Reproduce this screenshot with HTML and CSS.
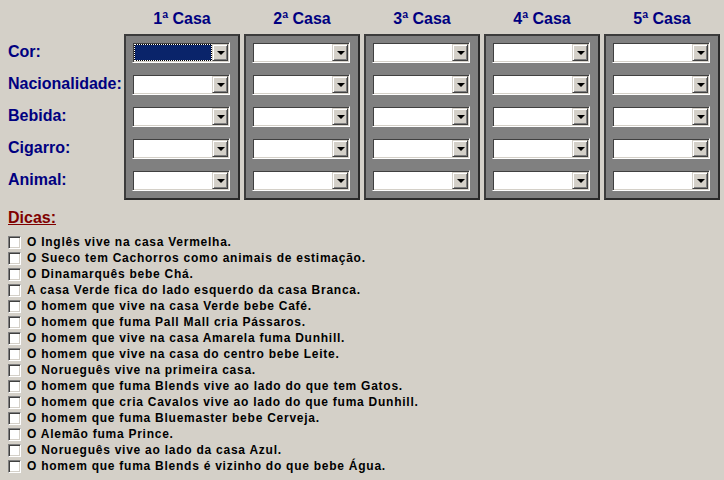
FILE: index.html
```html
<!DOCTYPE html>
<html lang="pt">
<head>
<meta charset="utf-8">
<link rel="stylesheet" href="styles.css">
</head>
<body>
<div class="puzzle">
  <div class="head-row">
    <div class="corner"></div>
    <div class="casa">1ª Casa</div>
    <div class="casa">2ª Casa</div>
    <div class="casa">3ª Casa</div>
    <div class="casa">4ª Casa</div>
    <div class="casa">5ª Casa</div>
  </div>
  <div class="body-row">
    <div class="labels">
      <div class="label">Cor:</div>
      <div class="label">Nacionalidade:</div>
      <div class="label">Bebida:</div>
      <div class="label">Cigarro:</div>
      <div class="label">Animal:</div>
    </div>
    <div class="panel">
      <div class="combo focused"><div class="field"></div><div class="btn"><span class="arrow"></span></div></div>
      <div class="combo"><div class="field"></div><div class="btn"><span class="arrow"></span></div></div>
      <div class="combo"><div class="field"></div><div class="btn"><span class="arrow"></span></div></div>
      <div class="combo"><div class="field"></div><div class="btn"><span class="arrow"></span></div></div>
      <div class="combo"><div class="field"></div><div class="btn"><span class="arrow"></span></div></div>
    </div>
    <div class="panel">
      <div class="combo"><div class="field"></div><div class="btn"><span class="arrow"></span></div></div>
      <div class="combo"><div class="field"></div><div class="btn"><span class="arrow"></span></div></div>
      <div class="combo"><div class="field"></div><div class="btn"><span class="arrow"></span></div></div>
      <div class="combo"><div class="field"></div><div class="btn"><span class="arrow"></span></div></div>
      <div class="combo"><div class="field"></div><div class="btn"><span class="arrow"></span></div></div>
    </div>
    <div class="panel">
      <div class="combo"><div class="field"></div><div class="btn"><span class="arrow"></span></div></div>
      <div class="combo"><div class="field"></div><div class="btn"><span class="arrow"></span></div></div>
      <div class="combo"><div class="field"></div><div class="btn"><span class="arrow"></span></div></div>
      <div class="combo"><div class="field"></div><div class="btn"><span class="arrow"></span></div></div>
      <div class="combo"><div class="field"></div><div class="btn"><span class="arrow"></span></div></div>
    </div>
    <div class="panel">
      <div class="combo"><div class="field"></div><div class="btn"><span class="arrow"></span></div></div>
      <div class="combo"><div class="field"></div><div class="btn"><span class="arrow"></span></div></div>
      <div class="combo"><div class="field"></div><div class="btn"><span class="arrow"></span></div></div>
      <div class="combo"><div class="field"></div><div class="btn"><span class="arrow"></span></div></div>
      <div class="combo"><div class="field"></div><div class="btn"><span class="arrow"></span></div></div>
    </div>
    <div class="panel">
      <div class="combo"><div class="field"></div><div class="btn"><span class="arrow"></span></div></div>
      <div class="combo"><div class="field"></div><div class="btn"><span class="arrow"></span></div></div>
      <div class="combo"><div class="field"></div><div class="btn"><span class="arrow"></span></div></div>
      <div class="combo"><div class="field"></div><div class="btn"><span class="arrow"></span></div></div>
      <div class="combo"><div class="field"></div><div class="btn"><span class="arrow"></span></div></div>
    </div>
  </div>
</div>

<div class="dicas">
  <div class="dicas-title">Dicas:</div>
  <ul class="hints">
    <li><span class="check"></span>O Inglês vive na casa Vermelha.</li>
    <li><span class="check"></span>O Sueco tem Cachorros como animais de estimação.</li>
    <li><span class="check"></span>O Dinamarquês bebe Chá.</li>
    <li><span class="check"></span>A casa Verde fica do lado esquerdo da casa Branca.</li>
    <li><span class="check"></span>O homem que vive na casa Verde bebe Café.</li>
    <li><span class="check"></span>O homem que fuma Pall Mall cria Pássaros.</li>
    <li><span class="check"></span>O homem que vive na casa Amarela fuma Dunhill.</li>
    <li><span class="check"></span>O homem que vive na casa do centro bebe Leite.</li>
    <li><span class="check"></span>O Norueguês vive na primeira casa.</li>
    <li><span class="check"></span>O homem que fuma Blends vive ao lado do que tem Gatos.</li>
    <li><span class="check"></span>O homem que cria Cavalos vive ao lado do que fuma Dunhill.</li>
    <li><span class="check"></span>O homem que fuma Bluemaster bebe Cerveja.</li>
    <li><span class="check"></span>O Alemão fuma Prince.</li>
    <li><span class="check"></span>O Norueguês vive ao lado da casa Azul.</li>
    <li><span class="check"></span>O homem que fuma Blends é vizinho do que bebe Água.</li>
  </ul>
</div>
</body>
</html>
```
FILE: styles.css
```css
html, body {
  margin: 0;
  padding: 0;
  background: #d4d0c8;
  width: 724px;
  height: 480px;
  overflow: hidden;
  font-family: "Liberation Sans", Arial, sans-serif;
}

.puzzle {
  display: flex;
  flex-direction: column;
}

.head-row,
.body-row {
  display: grid;
  grid-template-columns: 120px repeat(5, 116px);
  column-gap: 4px;
}

.casa {
  height: 34px;
  box-sizing: border-box;
  padding-top: 10px;
  line-height: 18px;
  font-size: 16px;
  font-weight: bold;
  color: #000080;
  text-align: center;
}

.labels {
  padding-left: 8px;
  padding-top: 8px;
  display: flex;
  flex-direction: column;
  gap: 11px;
}

.label {
  height: 21px;
  line-height: 19px;
  font-size: 16px;
  font-weight: bold;
  color: #000080;
  white-space: nowrap;
}

.panel {
  background: #808080;
  border: 2px solid #3c3c3c;
  border-right-color: #2a2a2a;
  border-bottom-color: #2a2a2a;
  padding: 6px 8px 7px 6px;
  display: flex;
  flex-direction: column;
  gap: 11px;
}

.combo {
  width: 98px;
  height: 21px;
  box-sizing: border-box;
  display: flex;
  border-style: solid;
  border-width: 1px;
  border-color: #808080 #ffffff #ffffff #808080;
  background: #ffffff;
  padding: 0;
  box-shadow: inset 1px 1px 0 #404040, inset -1px -1px 0 #d4d0c8;
}

.field {
  flex: 1;
  margin: 1px 0 1px 1px;
  background: #ffffff;
}

.focused .field {
  margin: 2px 1px 2px 2px;
  background: #0a246a;
  outline: 1px dotted #ffffff;
  outline-offset: 0;
  box-shadow: 0 0 0 1px #000;
}

.btn {
  width: 16px;
  height: 17px;
  margin: 1px 1px 1px 0;
  box-sizing: border-box;
  background: #d4d0c8;
  border-style: solid;
  border-width: 1px;
  border-color: #d4d0c8 #404040 #404040 #d4d0c8;
  box-shadow: inset 1px 1px 0 #ffffff, inset -1px -1px 0 #808080;
  display: flex;
  align-items: center;
  justify-content: center;
}

.arrow {
  width: 0;
  height: 0;
  border-left: 4px solid transparent;
  border-right: 4px solid transparent;
  border-top: 4px solid #000;
  margin-left: 1px;
  margin-top: 1px;
}

.dicas {
  padding: 9px 0 0 8px;
}

.dicas-title {
  font-size: 16px;
  line-height: 18px;
  font-weight: bold;
  color: #800000;
  text-decoration: underline;
  margin-bottom: 7px;
}

.hints {
  list-style: none;
  margin: 0;
  padding: 0;
}

.hints li {
  height: 16px;
  display: flex;
  align-items: center;
  font-size: 12px;
  font-weight: bold;
  color: #000;
  letter-spacing: 0.75px;
  white-space: nowrap;
}

.check {
  width: 13px;
  height: 13px;
  box-sizing: border-box;
  flex: none;
  margin-right: 6px;
  background: #ffffff;
  border-style: solid;
  border-width: 1px;
  border-color: #808080 #ffffff #ffffff #808080;
  box-shadow: inset 1px 1px 0 #404040, inset -1px -1px 0 #d4d0c8;
}
```
